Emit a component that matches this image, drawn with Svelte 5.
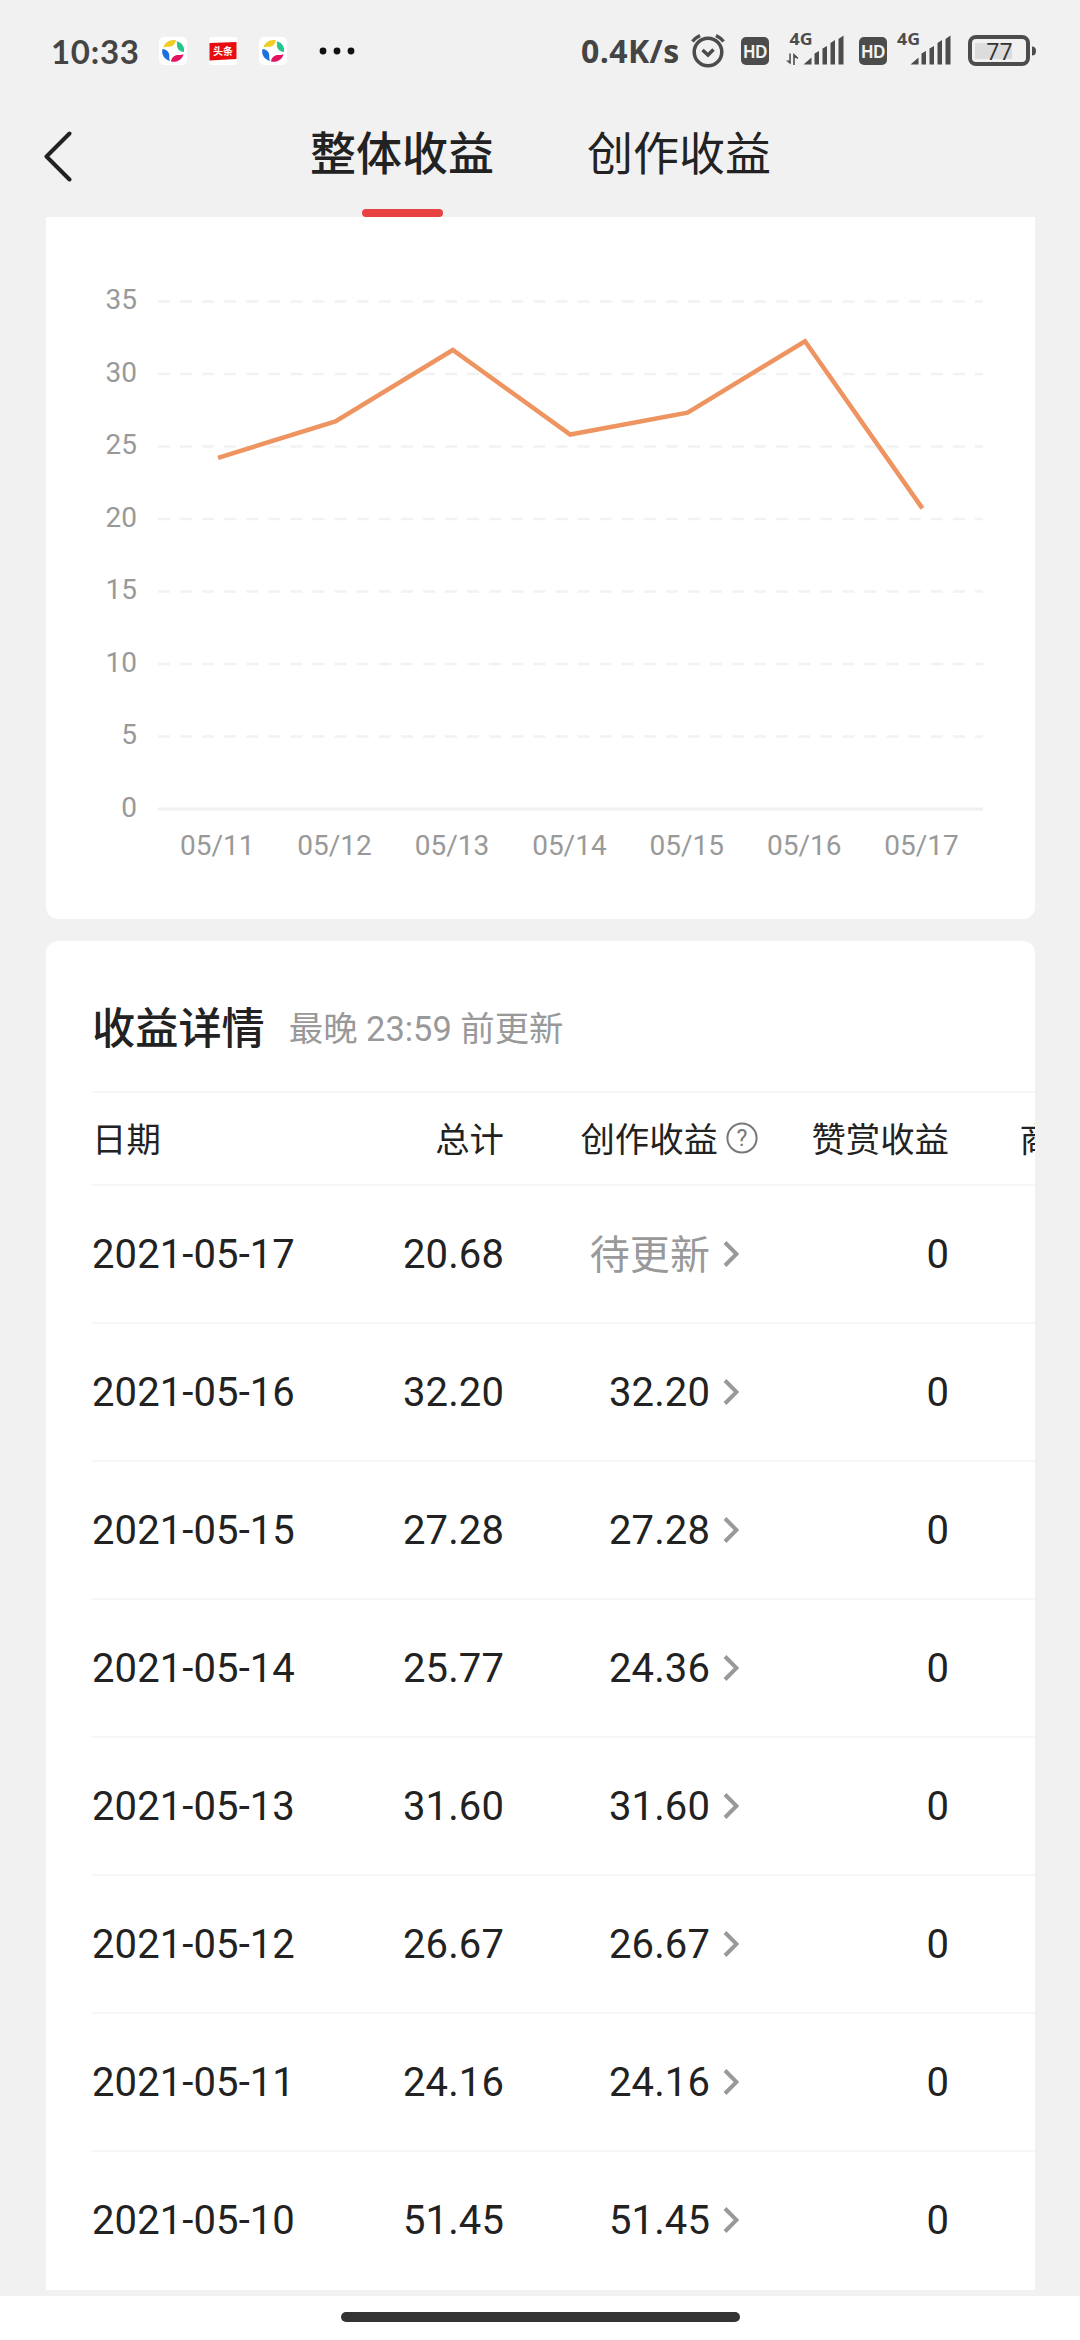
<script>
  const ticks = [35, 30, 25, 20, 15, 10, 5, 0];
  const points = [
    { day: '05/11', value: 24.16 },
    { day: '05/12', value: 26.67 },
    { day: '05/13', value: 31.6 },
    { day: '05/14', value: 25.77 },
    { day: '05/15', value: 27.28 },
    { day: '05/16', value: 32.2 },
    { day: '05/17', value: 20.68 }
  ];
  const px = (i) => 172 + i * 117.4;
  const py = (v) => 591.5 - v * 14.5;
  const line = points.map((p, i) => `${px(i)},${py(p.value) - 0.3}`).join(' ');

  const rows = [
    { date: '2021-05-17', total: '20.68', creation: '待更新', pending: true, reward: '0' },
    { date: '2021-05-16', total: '32.20', creation: '32.20', reward: '0' },
    { date: '2021-05-15', total: '27.28', creation: '27.28', reward: '0' },
    { date: '2021-05-14', total: '25.77', creation: '24.36', reward: '0' },
    { date: '2021-05-13', total: '31.60', creation: '31.60', reward: '0' },
    { date: '2021-05-12', total: '26.67', creation: '26.67', reward: '0' },
    { date: '2021-05-11', total: '24.16', creation: '24.16', reward: '0' },
    { date: '2021-05-10', total: '51.45', creation: '51.45', reward: '0' }
  ];
</script>

{#snippet pinwheel()}
  <svg class="app" viewBox="0 0 28 28">
    <rect width="28" height="28" rx="5" fill="#fff" />
    <path d="M4.500 10.500C5.500 5.500 11 2 17 3.200C16 7.500 13.500 9.800 9 9.800C7.500 9.800 5.500 10 4.500 10.500Z" fill="#f0cd22" />
    <path d="M17.500 4.500C22.500 5 26 9.500 25 15C20.500 14.800 17.500 11.500 18 7.500C18.100 6.500 18 5.500 17.500 4.500Z" fill="#27c588" />
    <path d="M24.500 17C23.500 22.500 18 25.800 12 24.500C12.500 20 16 17.600 20 18C21.500 18.100 23.500 17.800 24.500 17Z" fill="#e31360" />
    <path d="M3.500 12C8 12.500 10.800 15.500 10.300 19.500C10.100 21 10.300 22.500 11 24C5.500 22.500 2 17.500 3.500 12Z" fill="#1d71dc" />
  </svg>
{/snippet}

{#snippet hd()}
  <svg class="hd" viewBox="0 0 28 28">
    <rect width="28" height="28" rx="5" fill="#4c4c4c" />
    <text x="14.300" y="21" text-anchor="middle" textLength="24" lengthAdjust="spacingAndGlyphs">HD</text>
  </svg>
{/snippet}

{#snippet bars()}
  <path d="M0 46.500L8 39.500V46.500ZM11 35.500L15.500 33V46.500H11ZM19 30.500L23.500 28V46.500H19ZM27 25L31.500 22V46.500H27ZM35 21L40 17.500V46.500H35Z" />
{/snippet}

<div class="screen">
  <header class="status">
    <span class="time">10:33</span>
    {@render pinwheel()}
    <svg class="app news" viewBox="0 0 28 28">
      <rect width="28" height="28" rx="3" fill="#fff" />
      <path d="M0.500 6L27.500 5V22L0.500 23.500Z" fill="#e60c10" />
      <text x="14" y="18" text-anchor="middle">头条</text>
    </svg>
    {@render pinwheel()}
    <svg class="more" viewBox="0 0 36 8"><circle cx="4" cy="4" r="3.400" /><circle cx="18" cy="4" r="3.400" /><circle cx="32" cy="4" r="3.400" /></svg>
    <span class="speed">0.4K/s</span>
    <svg class="alarm" viewBox="0 0 36 36">
      <circle cx="18" cy="19" r="13.800" />
      <path d="M12.500 17L18 22L23.500 16.500M2.500 8.500Q5 5 10 2.500M26 2.500Q31 5 33.500 8.500" />
    </svg>
    {@render hd()}
    <svg class="signal first" viewBox="0 0 58 62">
      <text x="3.500" y="26.500" textLength="23" lengthAdjust="spacingAndGlyphs">4G</text>
      <path d="M0 42.500L4.800 46.500V35.500H3.300V42.500ZM7.200 47V35L12 39.500V41L8.800 39.500V47Z" />
      <g transform="translate(17.500 0)">{@render bars()}</g>
    </svg>
    {@render hd()}
    <svg class="signal second" viewBox="0 0 58 62">
      <text x="2" y="26.500" textLength="23" lengthAdjust="spacingAndGlyphs">4G</text>
      <g transform="translate(15.500 0)">{@render bars()}</g>
    </svg>
    <svg class="battery" viewBox="0 0 70 32">
      <rect x="7" y="8" width="37" height="16" fill="#dcdcdc" />
      <rect x="2" y="2" width="58" height="27" rx="6" fill="none" stroke="#4c4c4c" stroke-width="4" />
      <path d="M64 11.500Q68 11.500 68 16T64 20.500Z" fill="#4c4c4c" />
      <text x="31.500" y="24.500" text-anchor="middle">77</text>
    </svg>
  </header>

  <nav class="tabs">
    <svg class="back" viewBox="0 0 30 52"><path d="M26.500 3.500L3.500 26.500L26.500 49.500" /></svg>
    <div class="tab active">整体收益</div>
    <div class="tab">创作收益</div>
  </nav>

  <main>
    <section class="card chart-card">
      <svg class="chart" viewBox="0 0 989 702">
        {#each ticks as t}
          <text class="tick" x="91" y={py(t) + 8} text-anchor="end">{t}</text>
          {#if t > 0}
            <line class="grid" x1="112" x2="937" y1={py(t) + 0.5} y2={py(t) + 0.5} />
          {:else}
            <line class="axis" x1="112" x2="937" y1={py(t) + 0.5} y2={py(t) + 0.5} />
          {/if}
        {/each}
        {#each points as p, i}
          <text class="tick" x={px(i) - 0.8} y="638" text-anchor="middle">{p.day}</text>
        {/each}
        <polyline points={line} />
      </svg>
    </section>

    <section class="card detail">
      <div class="heading">
        <h2>收益详情</h2>
        <span>最晚 23:59 前更新</span>
      </div>
      <div class="row head">
        <span>日期</span>
        <span class="num">总计</span>
        <span class="creation">创作收益
          <svg class="help" viewBox="0 0 32 32"><circle cx="16" cy="16" r="14.600" /><text x="16" y="24" text-anchor="middle">?</text></svg>
        </span>
        <span class="num">赞赏收益</span>
        <span class="next">商</span>
      </div>
      {#each rows as r}
        <div class="row">
          <span>{r.date}</span>
          <span class="num">{r.total}</span>
          <span class="creation"><span class:pending={r.pending}>{r.creation}</span>
            <svg class="chevron" viewBox="0 0 16 30"><path d="M2 3.500L13.500 15L2 26.500" /></svg>
          </span>
          <span class="num">{r.reward}</span>
        </div>
      {/each}
    </section>
  </main>

  <footer><div class="pill"></div></footer>
</div>

<style>
  :global(body) { margin: 0; background: #f1f1f1; }
  .screen {
    width: 1080px;
    height: 2340px;
    display: flex;
    flex-direction: column;
    overflow: hidden;
    background: #f1f1f1;
    color: #222;
    font-family: Roboto, "Noto Sans CJK SC", sans-serif;
  }
  svg { display: block; flex: none; }

  .status {
    height: 102px;
    flex: none;
    display: flex;
    align-items: center;
    padding-left: 51px;
    box-sizing: border-box;
    color: #444;
  }
  .time { width: 108px; flex: none; font: 700 33px/102px Lato, sans-serif; letter-spacing: 0.7px; }
  .app { width: 28px; height: 28px; margin-right: 22px; }
  .news text { font: 700 10px "Noto Sans CJK SC", sans-serif; fill: #fff; }
  .more { width: 36px; height: 8px; margin-left: 10px; fill: #111; }
  .speed { margin-left: 226px; width: 109px; flex: none; font: 700 32px/104px "Open Sans", sans-serif; letter-spacing: 0.4px; white-space: nowrap; }
  .alarm { width: 36px; height: 36px; fill: none; stroke: #4c4c4c; stroke-width: 3.5; }
  .hd { width: 28px; height: 28px; margin-left: 15px; }
  .hd text { font: 700 18.5px "Liberation Sans", sans-serif; fill: #f1f1f1; }
  .signal { width: 58px; height: 62px; fill: #4c4c4c; align-self: flex-start; margin-top: 18px; }
  .signal text { font: 700 16px "Open Sans", sans-serif; }
  .first { margin-left: 17px; }
  .second { margin-left: 8px; }
  .battery { width: 70px; height: 32px; margin-left: 15px; }
  .battery text { font: 400 23px "Open Sans", sans-serif; fill: #333; }

  .tabs {
    height: 115px;
    flex: none;
    display: flex;
    align-items: flex-start;
    padding-left: 43px;
  }
  .back { width: 30px; height: 52px; margin-top: 28px; fill: none; stroke: #222; stroke-width: 4; stroke-linecap: round; stroke-linejoin: round; }
  .tab {
    height: 115px;
    display: flex;
    flex-direction: column;
    align-items: center;
    justify-content: space-between;
    font-size: 46px;
    line-height: 105px;
    margin-left: 93px;
  }
  .active { margin-left: 237px; font-weight: 500; }
  .active::after { content: ""; width: 81px; height: 8px; border-radius: 4px; background: #e94242; }

  main { flex: 1; padding: 0 45px 0 46px; min-height: 0; }
  .card { background: #fff; border-radius: 12px; overflow: hidden; }
  .chart-card { height: 702px; border-radius: 0 0 12px 12px; margin-bottom: 22px; }
  .chart { width: 989px; height: 702px; }
  .tick { font-size: 28px; fill: #999; }
  .grid { stroke: #f2f2f2; stroke-width: 2.5; stroke-dasharray: 12 10.08; }
  .axis { stroke: #f0f0f0; stroke-width: 3; }
  polyline { fill: none; stroke: #ee9460; stroke-width: 4.5; }

  .detail { height: 1349px; padding-left: 46px; box-sizing: border-box; border-radius: 12px 12px 0 0; }
  .heading { height: 150px; display: flex; align-items: center; padding-top: 17px; box-sizing: border-box; }
  h2 { margin: 0 24px 0 0; font-size: 43.2px; font-weight: 500; }
  .heading span { font-size: 34.4px; color: #999; padding-top: 3px; }
  .row {
    height: 138px;
    box-sizing: border-box;
    border-top: 2px solid #f6f6f6;
    display: grid;
    grid-template-columns: 212px 200px 256px 189px 86px;
    align-items: center;
    font-size: 40px;
    letter-spacing: 0.1px;
    white-space: nowrap;
  }
  .head { height: 93px; font-size: 34.4px; letter-spacing: 0; padding-bottom: 4px; }
  .num { text-align: right; }
  .creation { display: flex; justify-content: flex-end; align-items: center; padding-right: 21px; }
  .head .creation { padding-right: 2px; }
  .pending { color: #999; padding-bottom: 5px; }
  .next { text-align: right; margin-right: -19px; }
  .help { width: 32px; height: 32px; margin-left: 8px; margin-top: 2px; }
  .help circle { fill: none; stroke: #777; stroke-width: 2; }
  .help text { font-size: 23px; fill: #777; }
  .chevron { width: 16px; height: 30px; margin-left: 13px; fill: none; stroke: #999; stroke-width: 4; }

  footer { height: 44px; flex: none; background: #fff; display: flex; justify-content: center; padding-top: 16px; box-sizing: border-box; }
  .pill { width: 399px; height: 10px; border-radius: 5px; background: #333; }
</style>
